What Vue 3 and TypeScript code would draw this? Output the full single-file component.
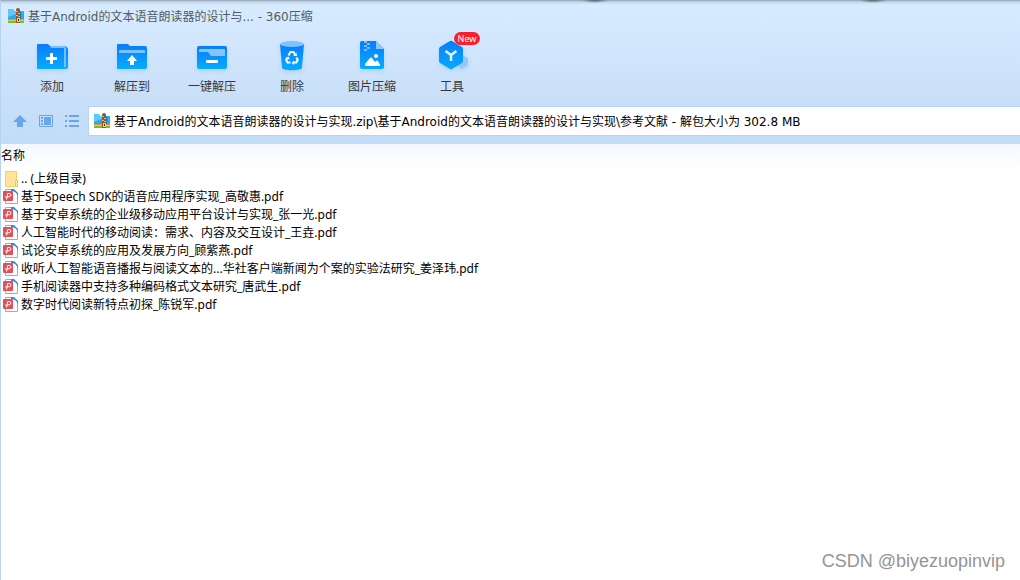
<script setup lang="ts">
type Tool = { id: string; label: string; badge?: string }

const tools: Tool[] = [
  { id: 'add', label: '添加' },
  { id: 'extract', label: '解压到' },
  { id: 'quick', label: '一键解压' },
  { id: 'delete', label: '删除' },
  { id: 'image', label: '图片压缩' },
  { id: 'tools', label: '工具', badge: 'New' },
]

const title = '基于Android的文本语音朗读器的设计与... - 360压缩'
const path =
  '基于Android的文本语音朗读器的设计与实现.zip\\基于Android的文本语音朗读器的设计与实现\\参考文献 - 解包大小为 302.8 MB'

const files: string[] = [
  '基于Speech SDK的语音应用程序实现_高敬惠.pdf',
  '基于安卓系统的企业级移动应用平台设计与实现_张一光.pdf',
  '人工智能时代的移动阅读：需求、内容及交互设计_王垚.pdf',
  '试论安卓系统的应用及发展方向_顾紫燕.pdf',
  '收听人工智能语音播报与阅读文本的...华社客户端新闻为个案的实验法研究_姜泽玮.pdf',
  '手机阅读器中支持多种编码格式文本研究_唐武生.pdf',
  '数字时代阅读新特点初探_陈锐军.pdf',
]
</script>

<template>
  <div class="window">
    <svg class="defs" width="0" height="0" aria-hidden="true">
      <defs>
        <linearGradient id="blue" x1="0" y1="0" x2="0" y2="1">
          <stop offset="0" stop-color="#087cfb" />
          <stop offset="1" stop-color="#05acff" />
        </linearGradient>
        <symbol id="archive" viewBox="0 0 16 16">
          <path d="M0 2q0-1 1-1h4l1 2h9q1 0 1 1v7H0z" fill="#2ba9ee" />
          <path d="M0 2q0-1 1-1h4l1 2h2v3L0 9z" fill="#5cc9fa" />
          <path d="M0 11h16v2H0z" fill="#f08a2a" />
          <path d="M0 12h16v1H0z" fill="#f5c63c" />
          <path d="M0 13h16v2H0z" fill="#6fbf3c" />
          <path d="M8 2q0-2 2-2t2 2v13H8z" fill="#8c5a2c" />
          <path d="M8 3h2v1H8zM10 5h2v1h-2zM8 7h2v1H8zM10 8h2v1h-2z" fill="#d9b78a" />
          <path d="M9 1h2v1H9z" fill="#3d6e96" />
          <path d="M9 10h3v4H9z" fill="#f6d25a" />
          <path d="M10 11h1v2h-1z" fill="#4a2a10" />
          <path d="M12 4h1v7h-1z" fill="#1b78bb" />
        </symbol>
      </defs>
    </svg>

    <header class="chrome">
      <div class="titlebar">
        <svg class="app-icon" width="16" height="16" aria-hidden="true"><use href="#archive" /></svg>
        <h1>{{ title }}</h1>
      </div>

      <nav class="toolbar" aria-label="工具栏">
        <button v-for="tool in tools" :key="tool.id" type="button" class="tool">
          <span class="tool-icon">
            <svg v-if="tool.id === 'add'" width="32" height="32" viewBox="0 0 32 32">
              <path d="M1 5q0-1 1-1h9q1 0 2 1l1 1h15q3 1 3 4v17q0 2-2 2H2q-1 0-1-1z" fill="url(#blue)" />
              <path d="M14 6h14q2 0 2 2v19h-2V9q0-1-1-1H15z" fill="#78bdff" />
              <path d="M14 13h3v4h4v3h-4v4h-3v-4h-4v-3h4z" fill="#fff" />
            </svg>
            <svg v-else-if="tool.id === 'extract'" width="32" height="32" viewBox="0 0 32 32">
              <path d="M1 5q0-1 1-1h9q1 0 2 1l1 1h15q2 0 2 2v19q0 2-2 2H2q-1 0-1-1z" fill="url(#blue)" />
              <path d="M3 13v-2q0-1 1-1h24q1 0 1 1v2z" fill="#7cc2ff" />
              <path d="M16 15l5 6h-3v4h-4v-4h-3z" fill="#fff" />
            </svg>
            <svg v-else-if="tool.id === 'quick'" width="32" height="32" viewBox="0 0 32 32">
              <rect x="1" y="6" width="30" height="23" rx="2" fill="url(#blue)" />
              <path d="M3 10q0-1 1-1h24q1 0 1 1v6H15l-3-4H3z" fill="#84c4ff" />
              <rect x="10" y="20" width="12" height="3" rx="1" fill="#fff" />
            </svg>
            <svg v-else-if="tool.id === 'delete'" width="32" height="32" viewBox="0 0 32 32">
              <path d="M4 4h24l-2 23q0 2-3 2.500Q16 31 9 29.500q-3-.5-3-2.500z" fill="url(#blue)" />
              <ellipse cx="16" cy="4" rx="12" ry="3" fill="#7fc2ff" />
              <g fill="none" stroke="#f1f9ff" stroke-width="2.200">
                <path d="M12.500 15.500l2-3.500h3l1.500 2.500M20.500 17.500l1.200 2.500-1.500 2.500h-3M14.500 22.500h-3L10.200 20l1.300-2.500" />
              </g>
              <path d="M17 16h4l-.5-3.500zM18 20.500V25l-2.500-2zM9.500 18l3-1.500 1.500 3z" fill="#f1f9ff" />
            </svg>
            <svg v-else-if="tool.id === 'image'" width="32" height="32" viewBox="0 0 32 32">
              <path d="M4 3q0-2 2-2h14l8 8v18q0 2-2 2H6q-2 0-2-2z" fill="url(#blue)" />
              <path d="M20 1l8 8h-8z" fill="#8bc8ff" />
              <path d="M8 1h3v2H8zM11 3h3v2h-3zM8 5h3v2H8zM11 7h3v2h-3zM8 9h3v2H8z" fill="#78bdff" />
              <circle cx="20" cy="16" r="2" fill="#fff" />
              <path d="M9 26v-2l5-6q1-1 2 0l3 4 1-1q1-1 2 0l2 4v1z" fill="#fff" />
            </svg>
            <svg v-else width="32" height="32" viewBox="0 0 32 32">
              <path d="M26 15l6 3v7l-6 4-6-4v-7z" fill="#91caff" />
              <path d="M14 1q1-.5 2 0l10 6q1 1 1 2v12q0 1-1 2l-10 6q-1 .5-2 0L4 23q-1-1-1-2V9q0-1 1-2z" fill="url(#blue)" />
              <path d="M9.500 11l5.500 4 5.500-4M15 15v6" fill="none" stroke="#e4f4ff" stroke-width="2.500" />
            </svg>
            <span v-if="tool.badge" class="badge">{{ tool.badge }}</span>
          </span>
          <span class="tool-label">{{ tool.label }}</span>
        </button>
      </nav>

      <div class="navbar">
        <div class="nav-buttons">
          <button type="button" aria-label="上一级">
            <svg width="14" height="14" viewBox="0 0 14 14"><path d="M7 1l7 7h-4v5H4V8H0z" fill="#6aa3ee" /></svg>
          </button>
          <button type="button" aria-label="预览视图">
            <svg width="14" height="14" viewBox="0 0 14 14">
              <path d="M.5 1.500h13v11H.5z" fill="none" stroke="#6aa3ee" />
              <path d="M2 3h2v2H2zM2 6h2v2H2zM2 9h2v2H2zM5 3h7v8H5z" fill="#6aa3ee" />
            </svg>
          </button>
          <button type="button" aria-label="列表视图">
            <svg width="14" height="14" viewBox="0 0 14 14">
              <path d="M0 1h2v2H0zM4 1h10v2H4zM0 6h2v2H0zM4 6h10v2H4zM0 11h2v2H0zM4 11h10v2H4z" fill="#6aa3ee" />
            </svg>
          </button>
        </div>
        <label class="address">
          <svg width="16" height="16" aria-hidden="true"><use href="#archive" /></svg>
          <input type="text" :value="path" readonly aria-label="路径" />
        </label>
      </div>
    </header>

    <main>
      <table>
        <thead>
          <tr><th scope="col">名称</th></tr>
        </thead>
        <tbody>
          <tr>
            <td>
              <div class="entry">
                <svg width="16" height="18" viewBox="0 0 16 18" aria-hidden="true">
                  <path d="M3.500 1.500h11v15h-11z" fill="#ffe597" stroke="#f3cf68" />
                  <path d="M13.500 10.500h2v6h-2z" fill="#fff0b5" stroke="#edc65c" />
                </svg>
                <span>.. (上级目录)</span>
              </div>
            </td>
          </tr>
          <tr v-for="file in files" :key="file">
            <td>
              <div class="entry">
                <svg width="16" height="18" viewBox="0 0 16 18" aria-hidden="true">
                  <path d="M3.500 1.500h8l4 4v10h-12z" fill="#fcfdfd" stroke="#a6abb0" />
                  <path d="M9 1h3l4 4v4q-1-4-3-5t-4-1z" fill="#2f8ad6" />
                  <rect x="1" y="3" width="10" height="10" rx="1" fill="#e4505a" />
                  <path d="M4.500 11.500q1-2 1-6Q9 5 9 7t-3.500 2H3" fill="none" stroke="#fff" />
                </svg>
                <span>{{ file }}</span>
              </div>
            </td>
          </tr>
        </tbody>
      </table>
    </main>

    <div class="watermark">CSDN @biyezuopinvip</div>
  </div>
</template>

<style>
body {
  background: #fff;
}
</style>

<style scoped>
.window {
  position: relative;
  box-sizing: border-box;
  min-height: 100vh;
  border-left: 1px solid #b5d3f3;
  background: #fff;
  color: #000;
  font: 12px/18px "Noto Sans", "Noto Sans CJK SC", sans-serif;
}
.defs {
  position: absolute;
}
.chrome {
  box-sizing: border-box;
  padding-bottom: 9px;
  background:
    radial-gradient(ellipse 14px 3px at 594px 0, #526373, transparent),
    radial-gradient(ellipse 14px 3px at 872px 0, #526373, transparent),
    linear-gradient(#93a5b6 0, #a9bccd 1px, #c4d8e9 2px, transparent 5px),
    linear-gradient(#d7ecff 0, #d1e6fd 50px, #c8dff8 100px, #c2ddf8 144px);
}
.titlebar {
  display: flex;
  align-items: center;
  gap: 4px;
  height: 32px;
  padding-left: 7px;
}
h1 {
  margin: 0;
  padding-top: 2px;
  color: #555a61;
  font: 12px/18px "DejaVu Sans", "Noto Sans CJK SC", sans-serif;
}
button {
  padding: 0;
  border: 0;
  background: none;
  color: inherit;
  font: inherit;
}
.toolbar {
  display: flex;
  height: 75px;
  padding-left: 11px;
}
.tool {
  display: flex;
  flex-direction: column;
  align-items: center;
  gap: 6px;
  width: 80px;
  padding-top: 8px;
}
.tool-icon {
  position: relative;
  height: 32px;
}
.tool-icon svg {
  display: block;
  overflow: visible;
  filter: drop-shadow(0 2px 2px #6fb3f055);
}
.badge {
  position: absolute;
  top: -8px;
  left: 18px;
  width: 26px;
  border-radius: 7px;
  background: #f9202d;
  color: #fff;
  font-size: 9px;
  line-height: 13px;
  text-align: center;
}
.tool-label {
  color: #35393e;
  white-space: nowrap;
}
.navbar {
  display: flex;
  align-items: center;
}
.nav-buttons {
  display: flex;
  gap: 12px;
  padding: 0 10px 0 12px;
}
.nav-buttons svg {
  display: block;
}
.address {
  display: flex;
  flex: 1;
  align-items: center;
  gap: 4px;
  height: 28px;
  padding-left: 5px;
  background: #fff;
  box-shadow: 0 0 0 1px #b7d4f1;
}
input {
  flex: 1;
  min-width: 0;
  padding: 2px 0 0;
  border: 0;
  outline: 0;
  background: none;
  color: #000;
  font: 12px/18px "DejaVu Sans", "Noto Sans CJK SC", sans-serif;
}
main {
  background: linear-gradient(#f3f8ff, #fff 24px);
}
table {
  width: 100%;
  border-collapse: collapse;
}
th {
  padding: 3px 0 5px;
  font-weight: 400;
  text-align: left;
}
td {
  padding: 0;
}
.entry {
  display: flex;
  align-items: center;
  gap: 3px;
  height: 18px;
  padding-left: 1px;
  white-space: nowrap;
}
.watermark {
  position: absolute;
  right: 15px;
  bottom: 8px;
  color: #949494;
  font: 18px/22px "Liberation Sans", sans-serif;
}
</style>
